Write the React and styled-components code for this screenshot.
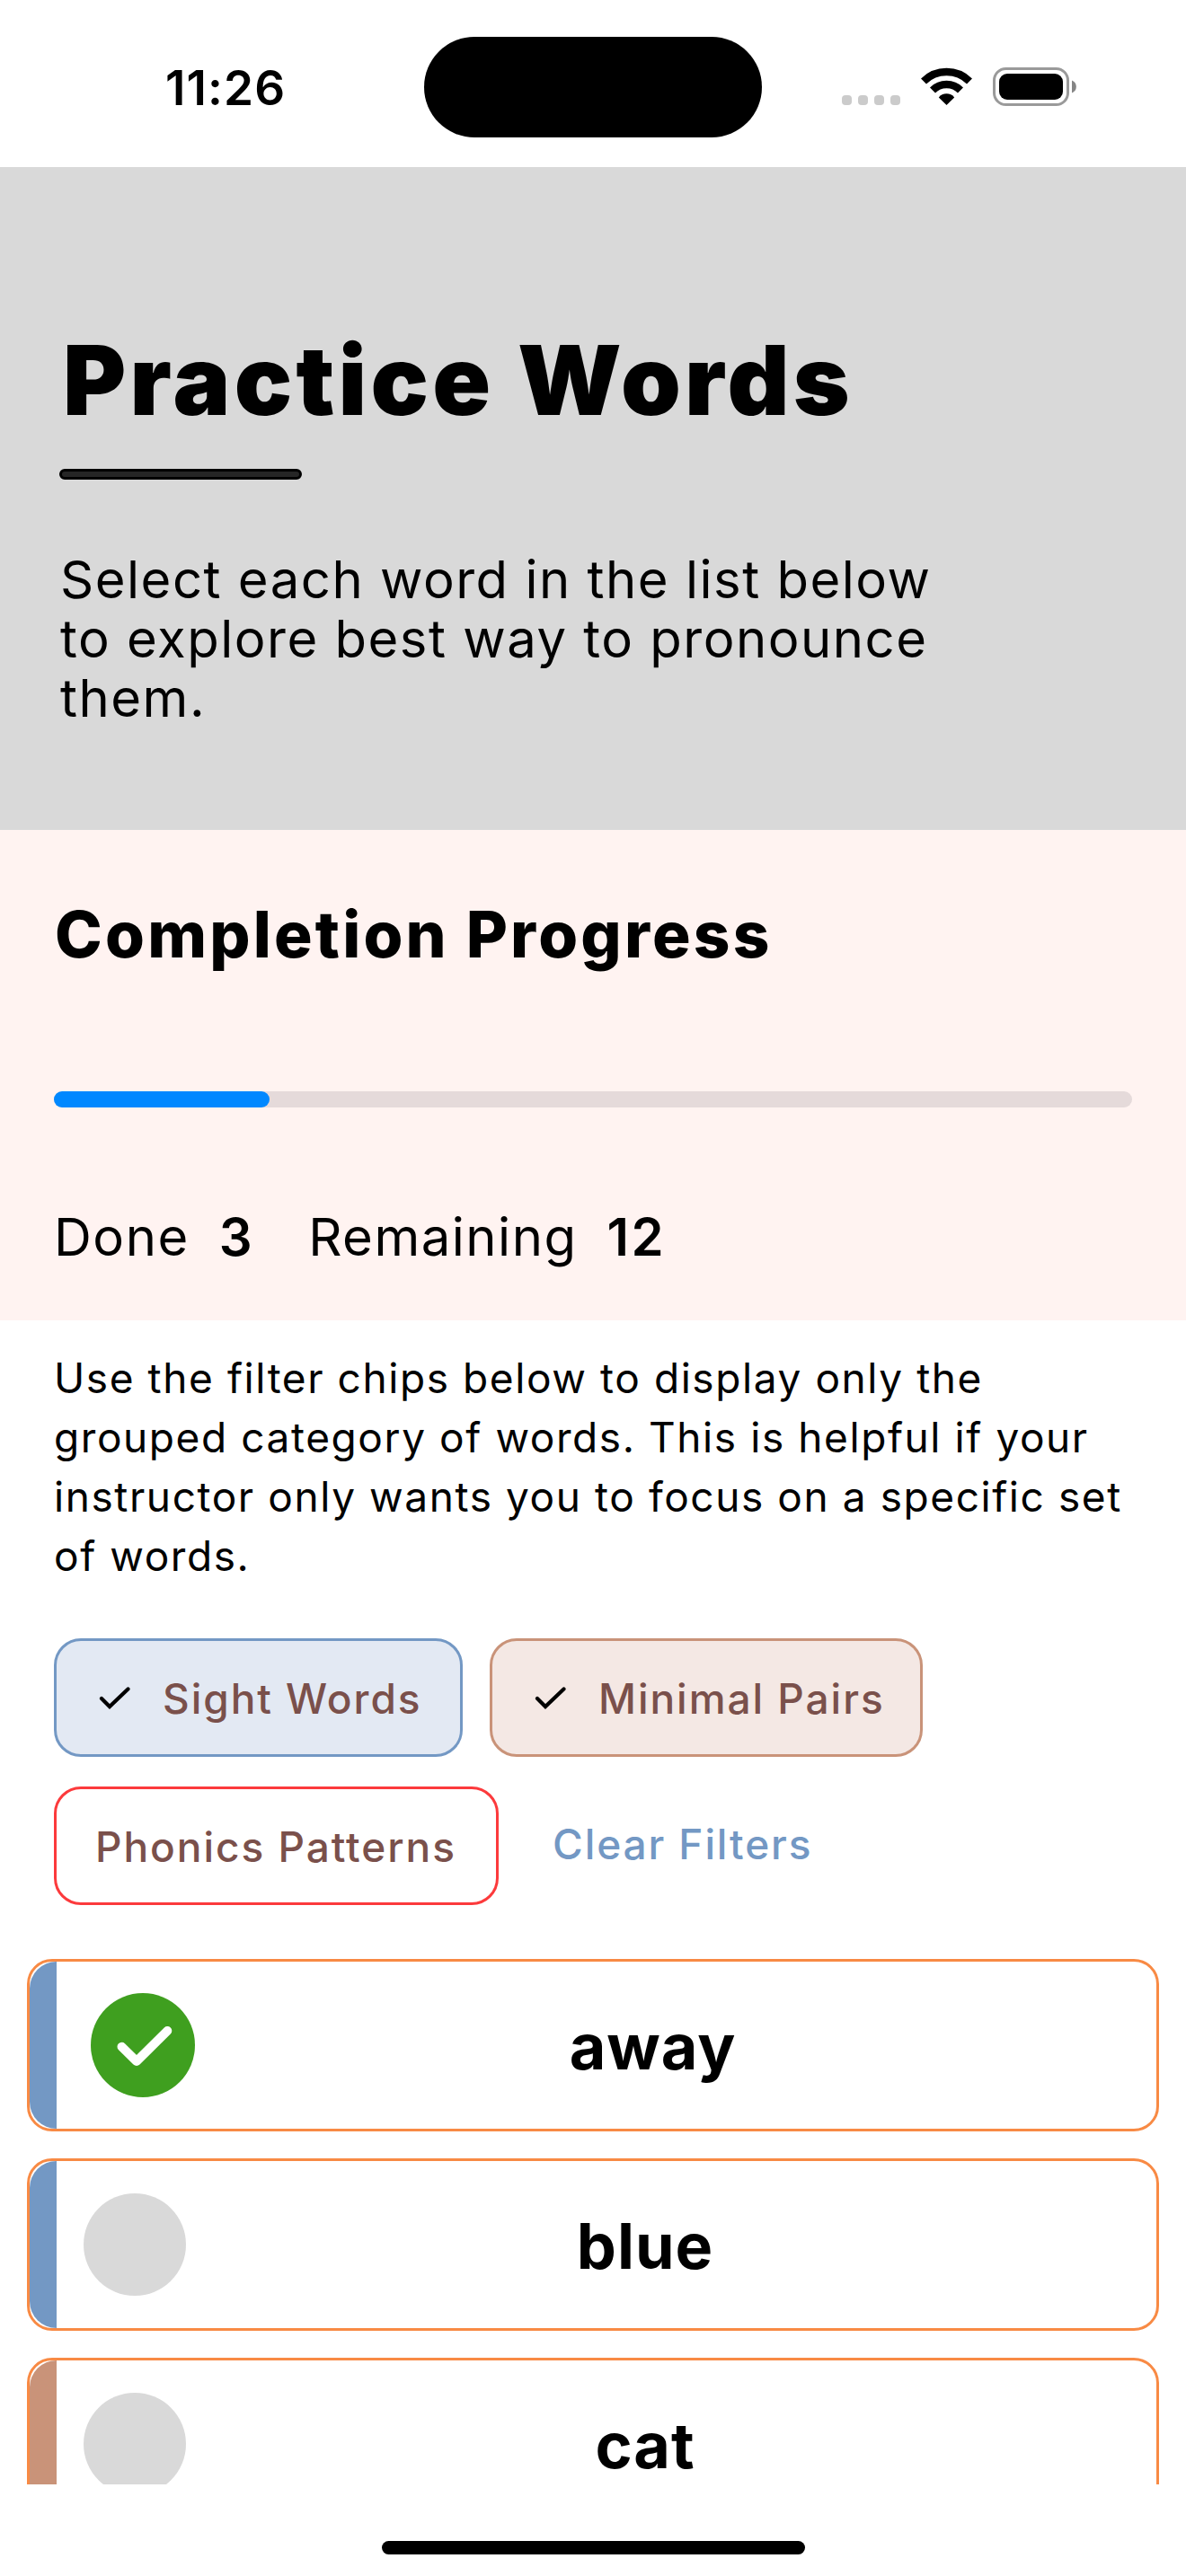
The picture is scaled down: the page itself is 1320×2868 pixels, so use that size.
import React from "react";
import styled, { createGlobalStyle } from "styled-components";

const GlobalStyle = createGlobalStyle`
  * { box-sizing: border-box; }
  body { margin: 0; background: #fff; }
  h1, h2, p { margin: 0; }
  button { font: inherit; background: none; border: 0; padding: 0; margin: 0; }
`;

const Screen = styled.main`
  width: 1320px;
  height: 2868px;
  display: flex;
  flex-direction: column;
  overflow: hidden;
  background: #fff;
  color: #000;
  font-family: Inter, "Liberation Sans", sans-serif;
  font-kerning: normal;
`;

const StatusBar = styled.header`
  flex: none;
  height: 186px;
  display: grid;
  grid-template-columns: 472px 376px 472px;
  padding-top: 41px;
`;

const Clock = styled.div`
  padding-top: 1px;
  padding-left: 184px;
  font-size: 53px;
  font-weight: 600;
  line-height: 112px;
  letter-spacing: 1.1px;
`;

const Island = styled.div`
  height: 112px;
  border-radius: 56px;
  background: #000;
`;

const Indicators = styled.div`
  height: 112px;
  padding-left: 89px;
  padding-top: 34px;
  display: flex;
  align-items: flex-start;
`;

const Hero = styled.section`
  flex: none;
  height: 738px;
  background: #d9d9d9;
  padding: 174px 66px 0;
`;

const Title = styled.h1`
  padding-left: 4px;
  font-size: 107px;
  font-weight: 900;
  line-height: 127px;
  letter-spacing: 4.3px;
  white-space: nowrap;
`;

const Rule = styled.div`
  width: 270px;
  height: 12px;
  margin-top: 35px;
  border: 3px solid #000;
  border-radius: 6px;
  background: #262626;
`;

const Lead = styled.p`
  margin-top: 78px;
  padding-left: 1px;
  font-size: 58px;
  line-height: 66px;
  letter-spacing: 1.5px;
  white-space: nowrap;
`;

const Progress = styled.section`
  flex: none;
  height: 546px;
  background: #fff3f1;
  padding: 70px 60px 0;
`;

const SectionTitle = styled.h2`
  padding-left: 1px;
  font-size: 71px;
  font-weight: 800;
  line-height: 92px;
  letter-spacing: 3.2px;
  white-space: nowrap;
`;

const Track = styled.div`
  height: 18px;
  margin-top: 129px;
  border-radius: 9px;
  background: #e5dada;
`;

const Fill = styled.div`
  height: 100%;
  border-radius: 9px;
  background: #0088ff;
`;

const Counts = styled.div`
  display: flex;
  gap: 60px;
  margin-top: 108px;
  font-size: 58px;
  line-height: 72px;
  letter-spacing: 1.5px;
`;

const Count = styled.span`
  display: flex;
  gap: 33px;
`;

const Amount = styled.b`
  font-weight: 600;
  letter-spacing: 2.5px;
`;

const Filters = styled.section`
  flex: none;
  height: 711px;
  padding: 31px 60px 0;
`;

const Hint = styled.p`
  font-size: 46px;
  line-height: 66px;
  letter-spacing: 1.58px;
  white-space: nowrap;
`;

const Chips = styled.div`
  display: flex;
  flex-wrap: wrap;
  gap: 33px 30px;
  margin-top: 59px;
`;

const Chip = styled.button`
  width: ${(p) => p.$width}px;
  height: 132px;
  display: flex;
  align-items: center;
  gap: 36px;
  padding-top: 2px;
  padding-left: ${(p) => (p.$selected ? 47 : 43)}px;
  border: 3px solid ${(p) => p.$border};
  border-radius: 30px;
  background: ${(p) => p.$fill};
  color: #7a504b;
  font-size: 46px;
  font-weight: 500;
  line-height: 60px;
  letter-spacing: 1.95px;
  white-space: nowrap;
`;

const ClearButton = styled.button`
  height: 128px;
  margin-left: 30px;
  color: #7398c4;
  font-size: 46px;
  font-weight: 500;
  line-height: 60px;
  letter-spacing: 1.9px;
`;

const WordList = styled.section`
  flex: none;
  height: 585px;
  overflow: hidden;
  display: flex;
  flex-direction: column;
  gap: 30px;
  padding: 0 30px;
`;

const WordCard = styled.article`
  flex: none;
  height: 192px;
  display: flex;
  align-items: center;
  border: 3px solid #f88a44;
  border-radius: 28px;
`;

const CategoryBar = styled.div`
  flex: none;
  width: 30px;
  height: 100%;
  border-radius: 30px 0 0 30px;
  background: ${(p) => p.$color};
`;

const Todo = styled.div`
  flex: none;
  width: 114px;
  height: 114px;
  margin-left: 30px;
  border-radius: 50%;
  background: #d9d9d9;
`;

const Done = styled.svg`
  flex: none;
  display: block;
  width: 116px;
  height: 116px;
  margin-left: 38px;
  margin-right: 7px;
`;

const Word = styled.div`
  flex: 1;
  padding-top: 4px;
  padding-right: 58px;
  text-align: center;
  font-size: 70px;
  font-weight: 700;
  line-height: 90px;
  letter-spacing: 1px;
`;

const Footer = styled.footer`
  flex: 1;
  display: flex;
  justify-content: center;
  align-items: flex-start;
  padding-top: 63px;
`;

const HomeIndicator = styled.div`
  width: 471px;
  height: 15px;
  margin-left: 1px;
  border-radius: 8px;
  background: #000;
`;

const BLUE = "#7398c4";
const CLAY = "#c99379";

const CheckMark = () => (
  <svg
    width="35"
    height="26"
    viewBox="0 0 35 26"
    fill="none"
    stroke="#000"
    strokeWidth="4.200"
    strokeLinecap="round"
  >
    <path d="M3 13 L12 22 L32.500 2.500" />
  </svg>
);

const StatusIcons = () => (
  <svg width="264" height="44" viewBox="0 0 264 44">
    {[0, 18, 36, 54].map((x) => (
      <rect key={x} x={x} y="31" width="11" height="11" rx="4" fill="#cbcbcb" />
    ))}
    <g fill="none" stroke="#000" strokeWidth="8.500">
      <path d="M91 15.500 A36.500 36.500 0 0 1 142 15.500" />
      <path d="M101 25.500 A22 22 0 0 1 132 25.500" />
    </g>
    <path d="M116.500 42 L107.800 33.500 A11 11 0 0 1 125.200 33.500 Z" fill="#000" />
    <rect x="169.500" y="1.500" width="82" height="40" rx="13" fill="none" stroke="#9a9a9a" strokeWidth="3" />
    <rect x="175" y="7" width="71" height="29" rx="9" fill="#000" />
    <path d="M256 14.500 A7.500 7.500 0 0 1 256 28.500 Z" fill="#858585" />
  </svg>
);

const words = [
  { text: "away", color: BLUE, done: true },
  { text: "blue", color: BLUE, done: false },
  { text: "cat", color: CLAY, done: false },
];

const done = 3;
const remaining = 12;

export default function App() {
  return (
    <Screen>
      <GlobalStyle />
      <StatusBar>
        <Clock>11:26</Clock>
        <Island />
        <Indicators>
          <StatusIcons />
        </Indicators>
      </StatusBar>

      <Hero>
        <Title>Practice Words</Title>
        <Rule />
        <Lead>
          Select each word in the list below
          <br />
          to explore best way to pronounce
          <br />
          them.
        </Lead>
      </Hero>

      <Progress>
        <SectionTitle>Completion Progress</SectionTitle>
        <Track>
          <Fill style={{ width: `${(done / (done + remaining)) * 100}%` }} />
        </Track>
        <Counts>
          <Count>
            Done <Amount>{done}</Amount>
          </Count>
          <Count>
            Remaining <Amount>{remaining}</Amount>
          </Count>
        </Counts>
      </Progress>

      <Filters>
        <Hint>
          Use the filter chips below to display only the
          <br />
          grouped category of words. This is helpful if your
          <br />
          instructor only wants you to focus on a specific set
          <br />
          of words.
        </Hint>
        <Chips>
          <Chip $selected $width={455} $border={BLUE} $fill="#e3e9f3">
            <CheckMark />
            Sight Words
          </Chip>
          <Chip $selected $width={482} $border={CLAY} $fill="#f4e8e4">
            <CheckMark />
            Minimal Pairs
          </Chip>
          <Chip $width={495} $border="#fc3a3c" $fill="#fff">
            Phonics Patterns
          </Chip>
          <ClearButton>Clear Filters</ClearButton>
        </Chips>
      </Filters>

      <WordList>
        {words.map((w) => (
          <WordCard key={w.text}>
            <CategoryBar $color={w.color} />
            {w.done ? (
              <Done viewBox="0 0 116 116">
                <circle cx="58" cy="58" r="58" fill="#3f9f1f" />
                <path
                  d="M34.500 59.700 L51 76 L85.300 42"
                  fill="none"
                  stroke="#fff"
                  strokeWidth="10"
                  strokeLinecap="round"
                  strokeLinejoin="round"
                />
              </Done>
            ) : (
              <Todo />
            )}
            <Word>{w.text}</Word>
          </WordCard>
        ))}
      </WordList>

      <Footer>
        <HomeIndicator />
      </Footer>
    </Screen>
  );
}
